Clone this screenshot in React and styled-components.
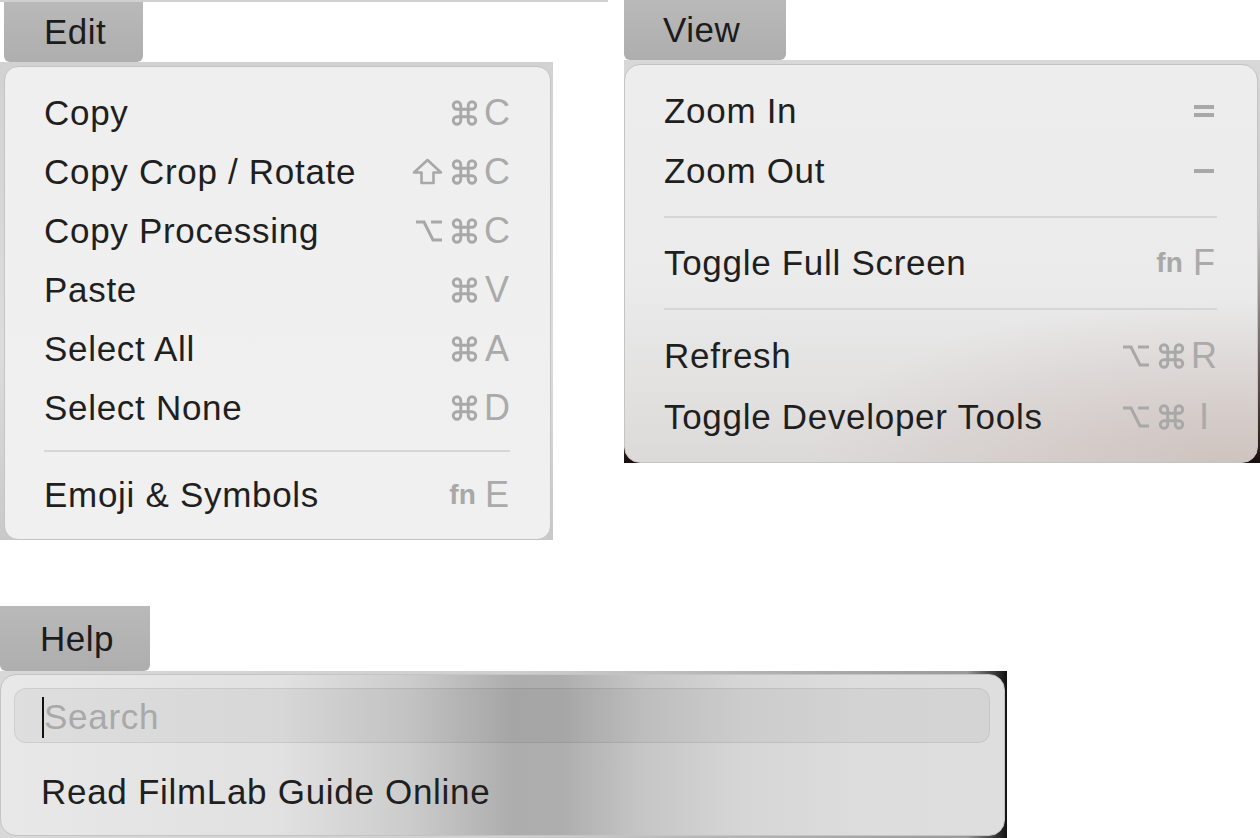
import React from "react";
import styled, { createGlobalStyle } from "styled-components";

const GlobalStyle = createGlobalStyle`
  html, body {
    margin: 0;
    padding: 0;
    background: #ffffff;
  }
  body {
    font-family: "Liberation Sans", Arial, sans-serif;
    -webkit-font-smoothing: antialiased;
  }
`;

const Page = styled.div`
  width: 1260px;
  height: 838px;
  overflow: hidden;
  display: flex;
  flex-direction: column;
`;

const TopRow = styled.div`
  display: flex;
  align-items: flex-start;
  height: 607px;
`;

const EditColumn = styled.div`
  width: 608px;
  border-top: 2px solid #d0d0d0;
  box-sizing: border-box;
`;

const ViewColumn = styled.div`
  margin-left: 16px;
  width: 636px;
`;

const Tab = styled.div`
  width: ${({ $w }) => $w}px;
  height: ${({ $h }) => $h}px;
  margin-left: ${({ $left }) => $left || 0}px;
  padding-left: ${({ $pad }) => $pad}px;
  box-sizing: border-box;
  display: flex;
  align-items: center;
  background: linear-gradient(180deg, #b9b9b9 0%, #aeaeae 100%);
  border-radius: 0 0 6px 6px;
  color: #1c1c1c;
  font-size: 35px;
  letter-spacing: 0.5px;
`;

const Backdrop = styled.div`
  width: ${({ $w }) => $w}px;
  padding: ${({ $pad }) => $pad};
  box-sizing: border-box;
  background: ${({ $bg }) => $bg};
`;

const Menu = styled.div`
  border: 1px solid #c4c4c4;
  border-radius: ${({ $r }) => $r || 14}px;
  padding: ${({ $pad }) => $pad};
  background: ${({ $bg }) => $bg};
  box-sizing: border-box;
`;

const Row = styled.div`
  height: ${({ $h }) => $h}px;
  display: flex;
  align-items: center;
  justify-content: space-between;
`;

const LinkRow = styled(Row)`
  margin-top: 19px;
  padding-left: 27px;
`;

const Label = styled.span`
  font-size: 35px;
  letter-spacing: 0.7px;
  color: #1f1f1f;
  white-space: nowrap;
`;

const Separator = styled.div`
  height: 2px;
  background: #d6d6d6;
  margin: ${({ $m }) => $m};
`;

const Shortcut = styled.div`
  display: flex;
  align-items: center;
  color: #a8a8a8;
`;

const Mods = styled.div`
  display: flex;
  align-items: center;
  gap: 8px;
  margin-right: 6px;
`;

const Key = styled.span`
  width: 26px;
  display: flex;
  justify-content: center;
  font-size: 36px;
  line-height: 1;
  color: #aaaaaa;
`;

const Fn = styled.span`
  font-size: 28px;
  font-weight: 700;
  color: #a8a8a8;
  letter-spacing: 0.2px;
  margin-right: 2px;
`;

const SearchField = styled.div`
  height: 55px;
  border-radius: 12px;
  border: 1px solid rgba(0, 0, 0, 0.07);
  background: rgba(0, 0, 0, 0.045);
  box-sizing: border-box;
  padding: 3px 0 0 27px;
  display: flex;
  align-items: center;
`;

const Caret = styled.span`
  width: 2px;
  height: 41px;
  background: #111;
`;

const Placeholder = styled.span`
  font-size: 35px;
  letter-spacing: 0.7px;
  color: #a9a9a9;
`;

const Cmd = () => (
  <svg width="27" height="26" viewBox="1.6 1.6 20.8 20.8" fill="none" stroke="#a8a8a8" strokeWidth="2.3" strokeLinecap="round" strokeLinejoin="round">
    <path d="M15 6v12a3 3 0 1 0 3-3H6a3 3 0 1 0 3 3V6a3 3 0 1 0-3 3h12a3 3 0 1 0-3-3" />
  </svg>
);

const Opt = () => (
  <svg width="28" height="24" viewBox="0 0 28 24" fill="none" stroke="#a8a8a8" strokeWidth="3" strokeLinecap="butt" strokeLinejoin="miter">
    <path d="M1 3h8l9 18h9" />
    <path d="M16 3h11" />
  </svg>
);

const Shift = () => (
  <svg width="31" height="27" viewBox="0 0 31 27" fill="none" stroke="#a8a8a8" strokeWidth="2.6" strokeLinejoin="round">
    <path d="M15.5 2L2 14.5h7.5V25h12V14.5H29z" />
  </svg>
);

const Bars = ({ two }) => (
  <svg width="20" height="14" viewBox="0 0 20 14" fill="#a8a8a8">
    {two ? (
      <>
        <rect x="0" y="1" width="20" height="4" />
        <rect x="0" y="9" width="20" height="4" />
      </>
    ) : (
      <rect x="0" y="5" width="20" height="4" />
    )}
  </svg>
);

const modIcons = { cmd: Cmd, opt: Opt, shift: Shift };

function Keys({ mods = [], fn, k }) {
  return (
    <Shortcut>
      <Mods>
        {fn && <Fn>fn</Fn>}
        {mods.map((m, i) => {
          const Icon = modIcons[m];
          return <Icon key={i} />;
        })}
      </Mods>
      <Key>{k}</Key>
    </Shortcut>
  );
}

const editItems = [
  { label: "Copy", mods: ["cmd"], k: "C" },
  { label: "Copy Crop / Rotate", mods: ["shift", "cmd"], k: "C" },
  { label: "Copy Processing", mods: ["opt", "cmd"], k: "C" },
  { label: "Paste", mods: ["cmd"], k: "V" },
  { label: "Select All", mods: ["cmd"], k: "A" },
  { label: "Select None", mods: ["cmd"], k: "D" },
];

export default function App() {
  return (
    <Page>
      <GlobalStyle />
      <TopRow>
        <EditColumn>
          <Tab $w={139} $h={60} $left={4} $pad={40}>Edit</Tab>
          <Backdrop
            $w={553}
            $pad="4px 2px 0 4px"
            $bg="linear-gradient(180deg, #d2d2d2 0%, #dcdcdc 60%, #c9c9c9 100%)"
          >
            <Menu $pad="16px 40px 15px 39px" $bg="linear-gradient(180deg, #efefef 0%, #f0f0f0 100%)">
              {editItems.map((it) => (
                <Row key={it.label} $h={59}>
                  <Label>{it.label}</Label>
                  <Keys mods={it.mods} k={it.k} />
                </Row>
              ))}
              <Separator $m="13px 0 13px 0" />
              <Row $h={59}>
                <Label>Emoji &amp; Symbols</Label>
                <Keys fn k="E" />
              </Row>
            </Menu>
          </Backdrop>
        </EditColumn>

        <ViewColumn>
          <Tab $w={162} $h={60} $pad={39}>View</Tab>
          <Backdrop
            $w={636}
            $pad="4px 2px 0 0"
            $bg="linear-gradient(180deg, #d8d8d8 0%, #c8c8c8 40%, #3a2a28 92%, #1a0f0e 100%)"
          >
            <Menu
              $r={16}
              $pad="16px 40px 15px 39px"
              $bg="radial-gradient(ellipse 420px 160px at 95% 100%, rgba(196,176,170,0.55), rgba(196,176,170,0) 100%), linear-gradient(180deg, #ededed 0%, #ebebeb 55%, #dcdad9 100%)"
            >
              <Row $h={60}>
                <Label>Zoom In</Label>
                <Shortcut><Key><Bars two /></Key></Shortcut>
              </Row>
              <Row $h={60}>
                <Label>Zoom Out</Label>
                <Shortcut><Key><Bars /></Key></Shortcut>
              </Row>
              <Separator $m="15px 0 15px 0" />
              <Row $h={60}>
                <Label>Toggle Full Screen</Label>
                <Keys fn k="F" />
              </Row>
              <Separator $m="15px 0 15px 0" />
              <Row $h={61}>
                <Label>Refresh</Label>
                <Keys mods={["opt", "cmd"]} k="R" />
              </Row>
              <Row $h={61}>
                <Label>Toggle Developer Tools</Label>
                <Keys mods={["opt", "cmd"]} k="I" />
              </Row>
            </Menu>
          </Backdrop>
        </ViewColumn>
      </TopRow>

      <Tab $w={150} $h={65} $pad={40}>Help</Tab>
      <Backdrop
        $w={1007}
        $pad="3px 2px 2px 0"
        $bg="linear-gradient(90deg, #d8d8d8 0%, #cfcfcf 50%, #9a9a9a 96%, #111 100%)"
      >
        <Menu
          $r={16}
          $pad="13px 14px 13px 13px"
          $bg="linear-gradient(90deg, #e8e8e8 0%, #e1e1e1 28%, #cbcbcb 41%, #adadad 51%, #aeaeae 56%, #c6c6c6 64%, #d6d6d6 74%, #dddddd 86%, #dedede 100%)"
        >
          <SearchField>
            <Caret />
            <Placeholder>Search</Placeholder>
          </SearchField>
          <LinkRow $h={60}>
            <Label>Read FilmLab Guide Online</Label>
          </LinkRow>
        </Menu>
      </Backdrop>
    </Page>
  );
}
